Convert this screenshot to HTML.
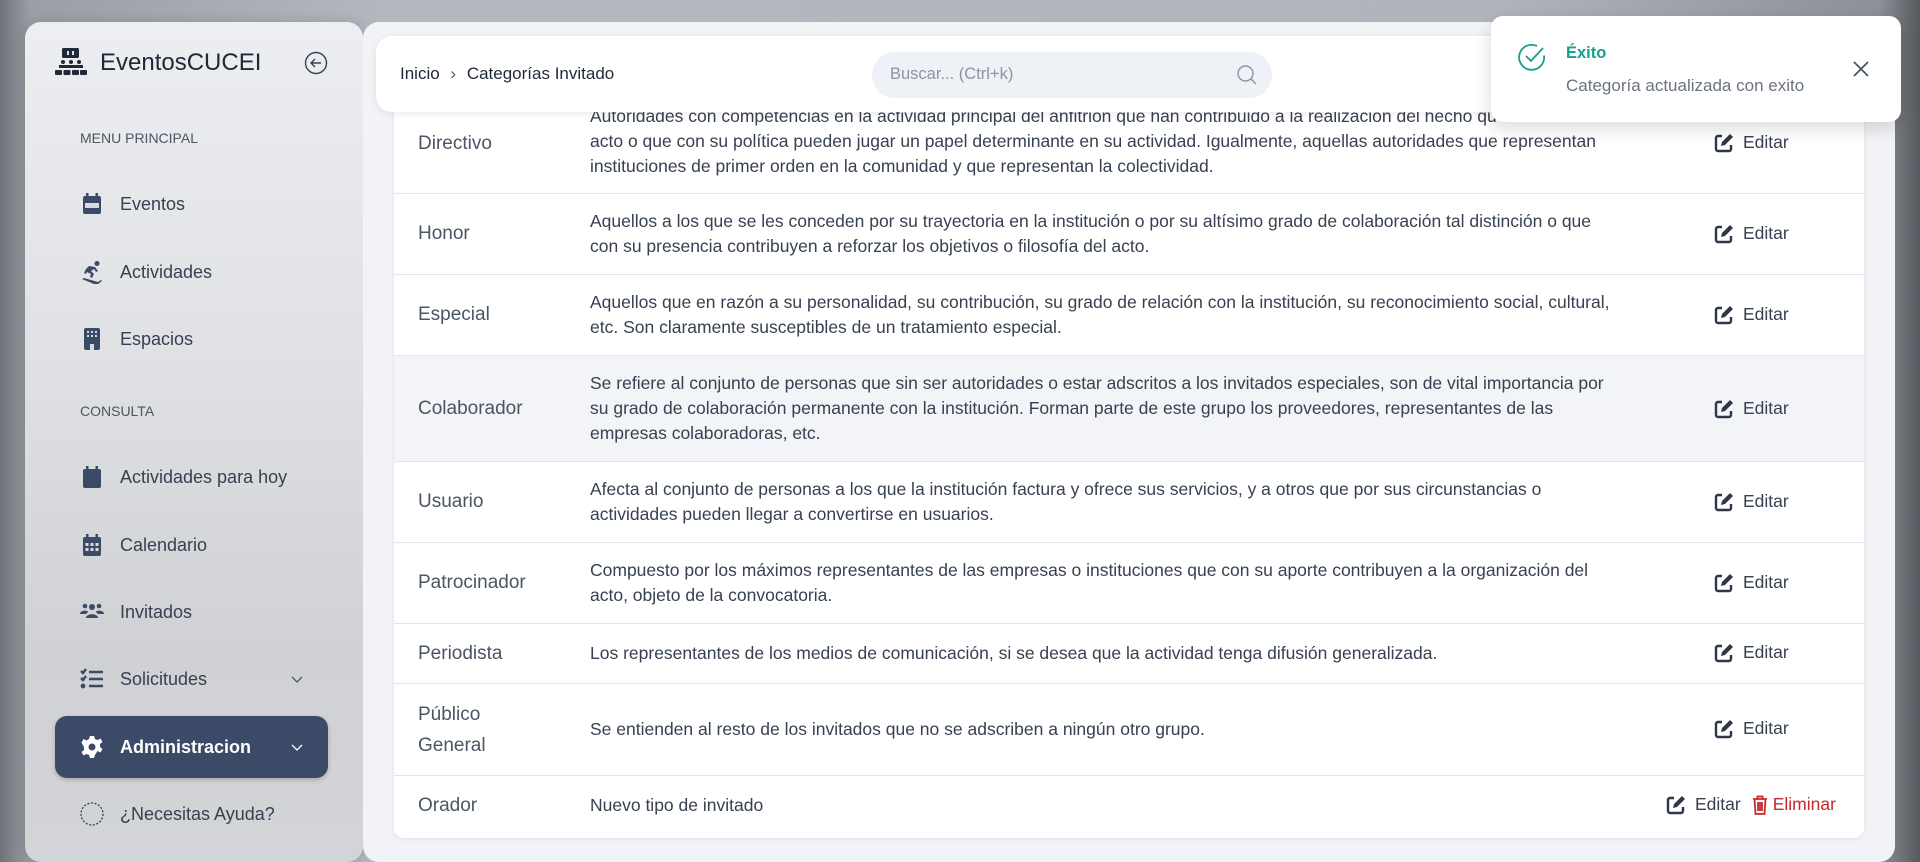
<!DOCTYPE html>
<html><head><meta charset="utf-8">
<style>
*{box-sizing:border-box;margin:0;padding:0}
body{width:1920px;height:840px;overflow:hidden;position:relative;font-family:"Liberation Sans",sans-serif;
background:linear-gradient(90deg,#6f7379 0px,#9a9ea5 30px,#b4b8bf 400px,#b0b4bb 1500px,#8d9197 1880px,#55585d 1920px);}
.sidebar{position:absolute;left:25px;top:22px;width:338px;height:840px;border-radius:16px;
background:linear-gradient(180deg,#eceef1 0%,#dfe1e4 40%,#cfd1d4 75%,#d2d4d7 100%);box-shadow:0 0 12px rgba(0,0,0,.15)}
.main{position:absolute;left:363px;top:22px;width:1532px;height:840px;border-radius:16px;background:#f1f3f6}
.header{position:absolute;left:376px;top:36px;width:1500px;height:76px;background:#fff;border-radius:16px;box-shadow:0 2px 8px rgba(0,0,0,.08);z-index:3}
.crumb{position:absolute;left:24px;top:28px;font-size:17px;color:#1f2937}
.search{position:absolute;left:496px;top:16px;width:400px;height:46px;background:#eef1f5;border-radius:23px}
.search span{position:absolute;left:18px;top:13px;font-size:16.5px;color:#8a94a3}
.card{position:absolute;left:394px;top:86px;width:1470px;height:752px;background:#fff;border-radius:10px;box-shadow:0 1px 4px rgba(0,0,0,.08);overflow:hidden}
.row{position:absolute;left:0;width:1470px;border-bottom:1.5px solid #e3e6ea}
.name{position:absolute;left:24px;font-size:19px;color:#4b5563;line-height:31px}
.desc{position:absolute;left:196px;font-size:17.5px;color:#374151;line-height:25px;white-space:nowrap}
.act{position:absolute;left:1320px;font-size:17.5px;color:#374151;display:flex;align-items:center;gap:9px}
.nav{position:absolute;left:80px;font-size:18px;color:#374151;display:flex;align-items:center}
.nav svg{width:24px;height:24px;margin-right:16px}
.sec{position:absolute;left:80px;font-size:14px;color:#4b5563}
.toast{position:absolute;left:1491px;top:16px;width:410px;height:106px;background:#fff;border-radius:12px;box-shadow:0 6px 18px rgba(0,0,0,.15);z-index:5}
</style></head><body>
<div class="sidebar"></div>
<svg style="position:absolute;left:55px;top:48px" width="32" height="30" viewBox="0 0 32 30">
<rect x="7" y="0" width="17" height="10" rx="1.5" fill="#1f2937"/><rect x="12" y="3" width="2" height="4" fill="#dfe1e4"/><rect x="17" y="3" width="2" height="4" fill="#dfe1e4"/>
<g fill="#1f2937"><circle cx="8" cy="14" r="2"/><circle cx="16" cy="14" r="2"/><circle cx="24" cy="14" r="2"/>
<rect x="4" y="17" width="24" height="3"/><rect x="0" y="22" width="7" height="5" rx="1"/><rect x="8.5" y="22" width="7" height="5" rx="1"/><rect x="17" y="22" width="7" height="5" rx="1"/><rect x="25" y="22" width="7" height="5" rx="1"/></g></svg>
<div style="position:absolute;left:100px;top:49px;font-size:24px;color:#1f2937">EventosCUCEI</div>
<svg style="position:absolute;left:304px;top:51px" width="24" height="24" viewBox="0 0 24 24" fill="none" stroke="#374151" stroke-width="1.4"><circle cx="12" cy="12" r="10.5"/><path d="M17 12H7M11 8l-4 4 4 4"/></svg>

<div class="sec" style="top:130px">MENU PRINCIPAL</div>
<div class="nav" style="top:192px"><svg viewBox="0 0 24 24"><rect x="3" y="4" width="18" height="18" rx="2" fill="#3b4a66"/><rect x="6" y="1" width="2.5" height="4" fill="#3b4a66"/><rect x="15.5" y="1" width="2.5" height="4" fill="#3b4a66"/><rect x="3" y="10" width="18" height="6" fill="#3b4a66"/><rect x="5" y="11" width="14" height="5" fill="#d8dadd"/></svg>Eventos</div>
<div class="nav" style="top:260px"><svg viewBox="0 0 24 24" fill="#3b4a66"><circle cx="17" cy="3.5" r="2.5"/><path d="M9 6l6 1 3 4-2 1-2-3-3 2 3 3-2 4-2-1 1-3-4-2-1 2-2-1 2-4z"/><path d="M2 19l2-1 14 4 3-2 1 1-4 3H14z"/></svg>Actividades</div>
<div class="nav" style="top:327px"><svg viewBox="0 0 24 24"><rect x="4" y="1" width="16" height="22" rx="2" fill="#3b4a66"/><g fill="#d8dadd"><rect x="7" y="4" width="2" height="2"/><rect x="11" y="4" width="2" height="2"/><rect x="15" y="4" width="2" height="2"/><rect x="7" y="8" width="2" height="2"/><rect x="11" y="8" width="2" height="2"/><rect x="15" y="8" width="2" height="2"/><rect x="10" y="17" width="4" height="6"/></g></svg>Espacios</div>
<div class="sec" style="top:403px">CONSULTA</div>
<div class="nav" style="top:465px"><svg viewBox="0 0 24 24" fill="#3b4a66"><rect x="3" y="4" width="18" height="19" rx="2"/><rect x="6" y="1" width="2.5" height="4"/><rect x="15.5" y="1" width="2.5" height="4"/></svg>Actividades para hoy</div>
<div class="nav" style="top:533px"><svg viewBox="0 0 24 24"><rect x="3" y="4" width="18" height="19" rx="2" fill="#3b4a66"/><rect x="6" y="1" width="2.5" height="4" fill="#3b4a66"/><rect x="15.5" y="1" width="2.5" height="4" fill="#3b4a66"/><g fill="#d8dadd"><rect x="5.5" y="10" width="3" height="3"/><rect x="10.5" y="10" width="3" height="3"/><rect x="15.5" y="10" width="3" height="3"/><rect x="5.5" y="15" width="3" height="3"/><rect x="10.5" y="15" width="3" height="3"/><rect x="15.5" y="15" width="3" height="3"/></g></svg>Calendario</div>
<div class="nav" style="top:600px"><svg viewBox="0 0 24 24" fill="#3b4a66"><circle cx="12" cy="7" r="3"/><circle cx="5" cy="6" r="2.3"/><circle cx="19" cy="6" r="2.3"/><path d="M6 18c0-5 12-5 12 0z"/><path d="M0 14c0-4 8-4 8-2l-2 2z"/><path d="M24 14c0-4-8-4-8-2l2 2z"/></svg>Invitados</div>
<div class="nav" style="top:667px"><svg viewBox="0 0 24 24" fill="none" stroke="#3b4a66" stroke-width="2.4"><path d="M1 4l2 2 3-4M1 11l2 2 3-4"/><path d="M9 5h14M9 12h14M9 19h14"/><circle cx="3" cy="19" r="1.2" fill="#3b4a66"/></svg>Solicitudes</div>
<svg style="position:absolute;left:290px;top:674px" width="14" height="10" viewBox="0 0 14 10" fill="none" stroke="#4b5563" stroke-width="1.3"><path d="M2 3l5 5 5-5"/></svg>
<div style="position:absolute;left:55px;top:716px;width:273px;height:62px;background:#3b4a66;border-radius:12px;box-shadow:0 2px 5px rgba(0,0,0,.2)"></div>
<div class="nav" style="top:735px;color:#fff;font-weight:bold"><svg viewBox="0 0 24 24" fill="#fff"><path d="M10 1h4l1 3 2.5 1 3-1.5 2 3.5-2.5 2v3l2.5 2-2 3.5-3-1.5L15 20l-1 3h-4l-1-3-2.5-1-3 1.5-2-3.5 2.5-2v-3L1.5 7.5l2-3.5 3 1.5L9 4z"/><circle cx="12" cy="12" r="3.5" fill="#3b4a66"/></svg>Administracion</div>
<svg style="position:absolute;left:290px;top:742px" width="14" height="10" viewBox="0 0 14 10" fill="none" stroke="#fff" stroke-width="1.3"><path d="M2 3l5 5 5-5"/></svg>
<div class="nav" style="top:802px"><svg viewBox="0 0 24 24" fill="none" stroke="#374151" stroke-width="1.3" stroke-dasharray="2 1.6"><circle cx="12" cy="12" r="11"/></svg>¿Necesitas Ayuda?</div>

<div class="main"></div>
<div class="card">
 <div class="row" style="top:0;height:108px"><div class="name" style="top:42px">Directivo</div><div class="desc" style="top:18px">Autoridades con competencias en la actividad principal del anfitrión que han contribuido a la realización del hecho que se celebra en el<br>acto o que con su política pueden jugar un papel determinante en su actividad. Igualmente, aquellas autoridades que representan<br>instituciones de primer orden en la comunidad y que representan la colectividad.</div><div class="act" style="top:46px">EDIT Editar</div></div>
 <div class="row" style="top:108px;height:81px"><div class="name" style="top:24px">Honor</div><div class="desc" style="top:15px">Aquellos a los que se les conceden por su trayectoria en la institución o por su altísimo grado de colaboración tal distinción o que<br>con su presencia contribuyen a reforzar los objetivos o filosofía del acto.</div><div class="act" style="top:29px">EDIT Editar</div></div>
 <div class="row" style="top:189px;height:81px"><div class="name" style="top:24px">Especial</div><div class="desc" style="top:15px">Aquellos que en razón a su personalidad, su contribución, su grado de relación con la institución, su reconocimiento social, cultural,<br>etc. Son claramente susceptibles de un tratamiento especial.</div><div class="act" style="top:29px">EDIT Editar</div></div>
 <div class="row" style="top:270px;height:106px;background:#f2f4f7"><div class="name" style="top:37px">Colaborador</div><div class="desc" style="top:15px">Se refiere al conjunto de personas que sin ser autoridades o estar adscritos a los invitados especiales, son de vital importancia por<br>su grado de colaboración permanente con la institución. Forman parte de este grupo los proveedores, representantes de las<br>empresas colaboradoras, etc.</div><div class="act" style="top:42px">EDIT Editar</div></div>
 <div class="row" style="top:376px;height:81px"><div class="name" style="top:24px">Usuario</div><div class="desc" style="top:15px">Afecta al conjunto de personas a los que la institución factura y ofrece sus servicios, y a otros que por sus circunstancias o<br>actividades pueden llegar a convertirse en usuarios.</div><div class="act" style="top:29px">EDIT Editar</div></div>
 <div class="row" style="top:457px;height:81px"><div class="name" style="top:24px">Patrocinador</div><div class="desc" style="top:15px">Compuesto por los máximos representantes de las empresas o instituciones que con su aporte contribuyen a la organización del<br>acto, objeto de la convocatoria.</div><div class="act" style="top:29px">EDIT Editar</div></div>
 <div class="row" style="top:538px;height:60px"><div class="name" style="top:14px">Periodista</div><div class="desc" style="top:17px">Los representantes de los medios de comunicación, si se desea que la actividad tenga difusión generalizada.</div><div class="act" style="top:18px">EDIT Editar</div></div>
 <div class="row" style="top:598px;height:92px"><div class="name" style="top:15px">Público<br>General</div><div class="desc" style="top:33px">Se entienden al resto de los invitados que no se adscriben a ningún otro grupo.</div><div class="act" style="top:34px">EDIT Editar</div></div>
 <div class="row" style="top:690px;height:62px;border:none"><div class="name" style="top:14px">Orador</div><div class="desc" style="top:17px">Nuevo tipo de invitado</div><div class="act" style="top:18px;left:1272px">EDIT Editar <span style="color:#c62828;display:flex;align-items:center;gap:5px;margin-left:2px"><svg width="16" height="20" viewBox="0 0 16 20" fill="none" stroke="#c62828" stroke-width="1.8"><path d="M1 4h14M5.5 4V1.5h5V4M2.5 4l1 15h9l1-15M6 7v9M8 7v9M10 7v9"/></svg>Eliminar</span></div></div>
</div>

<div class="header"><div class="crumb">Inicio <span style="margin:0 6px;color:#4b5563">›</span> Categorías Invitado</div>
<div class="search"><span>Buscar... (Ctrl+k)</span><svg style="position:absolute;left:364px;top:12px" width="22" height="22" viewBox="0 0 22 22" fill="none" stroke="#8a94a3" stroke-width="1.4"><circle cx="9.5" cy="9.5" r="7.5"/><path d="M15 15l5 5"/></svg></div></div>

<div class="toast">
<svg style="position:absolute;left:26px;top:26px" width="30" height="30" viewBox="0 0 30 30" fill="none" stroke="#14a08a" stroke-width="1.8"><path d="M27 13.5A12.5 12.5 0 1 1 20 4"/><path d="M9 14l5 5 12-13"/></svg>
<div style="position:absolute;left:75px;top:28px;font-size:16.5px;font-weight:bold;color:#14a08a">Éxito</div>
<div style="position:absolute;left:75px;top:60px;font-size:17px;color:#6b7280">Categoría actualizada con exito</div>
<svg style="position:absolute;left:361px;top:44px" width="18" height="18" viewBox="0 0 18 18" stroke="#4b5563" stroke-width="1.8"><path d="M2 2l14 14M16 2L2 16"/></svg>
</div>
<script>
document.querySelectorAll('.act').forEach(function(a){a.innerHTML=a.innerHTML.replace(/EDIT/g,'<svg width="20" height="20" viewBox="0 0 20 20"><path d="M8 3H4a2 2 0 0 0-2 2v11a2 2 0 0 0 2 2h11a2 2 0 0 0 2-2v-4" fill="none" stroke="#2d3748" stroke-width="2.4"/><path d="M7 13l1-4 8-8 3 3-8 8z" fill="#2d3748"/></svg>')});
</script>
</body></html>
